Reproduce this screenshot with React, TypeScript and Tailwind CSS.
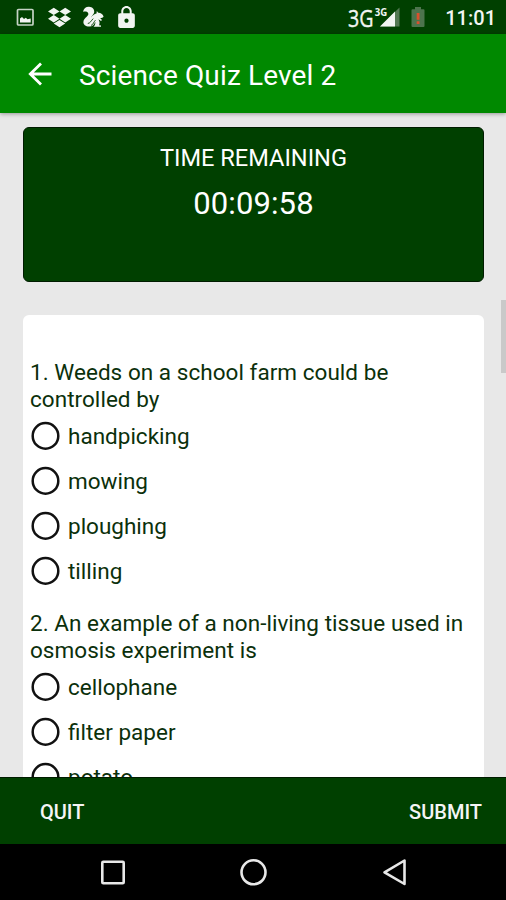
import { FaDropbox } from "react-icons/fa";
import { MdLock } from "react-icons/md";

const questions = [
  {
    text: "1. Weeds on a school farm could be controlled by",
    options: ["handpicking", "mowing", "ploughing", "tilling"],
  },
  {
    text: "2. An example of a non-living tissue used in osmosis experiment is",
    options: ["cellophane", "filter paper", "potato"],
  },
];

function StatusBar() {
  return (
    <div className="flex h-[34px] shrink-0 items-center bg-[#004000] text-[#f2f5f2]">
      <svg className="ml-4 h-[19px] w-[19px]" viewBox="0 0 19 19">
        <rect x="1.5" y="1.5" width="15.5" height="15.5" rx="1" fill="none" stroke="#c5d3c5" strokeWidth="1.7" />
        <path d="M4 14.500v-4l2-1.500 2 2 1.800-1.200 1.700 1.500 3.200-.8v4z" fill="#f2f5f2" />
      </svg>
      <FaDropbox className="ml-[13px] size-[23px]" />
      <svg className="ml-[11px] h-[22px] w-[22px]" viewBox="0 0 22 22" fill="currentColor">
        <path d="M1 5.8C1.600 2.500 4 .6 7 .7c3.500.1 5.600 2.500 5.200 5.500-.3 2.200-2.600 3.300-3.200 5.200 1.500-2.200 3.300-3.300 5.500-4l.3-2.300 1.500 1.600c2.300-.1 4.200 1.200 5.300 3.700-.6 1.200-1.900 1.500-3.500 1.500l1.900 2.200-1 .8-2.600-1.700c1.400 2.400 1.500 4.500.6 6.100l2 .1v1.300h-7.500c1.500-1.300 2.100-3 1.700-5-.9 2.800-2.700 4.800-5.700 4.900C3.600 20.700 1.300 18.600 1.400 16c.1-2.500 1.800-3.700 3.300-5.200 1.300-1.200 2.100-2.300 1.400-3.700C5.200 5.400 3.100 5.300 1 5.800z" />
        <path d="M5.800 17.500c2.300-.2 3.400-2.800 5.400-4.900M9 19.500c2.500-1.200 2.700-3.500 4.400-5.300" fill="none" stroke="#004000" strokeWidth=".9" />
      </svg>
      <MdLock className="ml-[10px] size-[25px]" />
      <svg className="ml-auto h-[34px] w-[52px]" viewBox="0 0 52 34">
        <text x="0" y="26.700" fill="#f2f5f2" stroke="#f2f5f2" strokeWidth=".4" fontFamily="Open Sans" fontSize="24.500" textLength="25.500" lengthAdjust="spacingAndGlyphs">3G</text>
        <path d="M51.500 7.500V26.500H32z" fill="#527852" />
        <path d="M47 11.500v15H32z" fill="#f2f5f2" />
        <text x="26.800" y="16" fill="#f2f5f2" stroke="#004000" strokeWidth=".5" paintOrder="stroke" fontFamily="Open Sans" fontWeight="700" fontSize="11" textLength="12.500" lengthAdjust="spacingAndGlyphs">3G</text>
      </svg>
      <svg className="ml-[11px] h-[20px] w-[14px]" viewBox="0 0 14 20">
        <path d="M4 0h6v2.200h2.500q1 0 1 1V19q0 1-1 1h-11q-1 0-1-1V3.200q0-1 1-1H4z" fill="#4d744d" />
        <path d="M5.700 6h2.800v6.800H5.700zm0 8.300h2.800V17H5.700z" fill="#d9502c" />
      </svg>
      <span className="mr-[10px] ml-[20px] pt-[2px] text-[20px] leading-6 font-medium">11:01</span>
    </div>
  );
}

function Option({ label }: { label: string }) {
  return (
    <label className="flex h-[45px] items-center">
      <svg className="ml-px h-[30px] w-[30px] shrink-0" viewBox="0 0 30 30">
        <circle cx="14.500" cy="14.900" r="12.800" fill="none" stroke="#111" strokeWidth="2.500" />
      </svg>
      <span className="ml-[7px] pt-[2px] text-[22.500px] leading-[27px]">{label}</span>
    </label>
  );
}

export default function App() {
  return (
    <div className="flex h-[900px] w-[506px] flex-col overflow-hidden bg-[#e8e8e8] font-[Roboto,sans-serif]">
      <StatusBar />
      <header className="z-10 flex h-[79px] shrink-0 items-center bg-[#008900] text-white shadow-[0_1px_4px_rgba(0,0,0,0.35)]">
        <svg className="ml-[28px] h-6 w-6" viewBox="0 0 24 24" fill="none" stroke="currentColor" strokeWidth="2.800">
          <path d="M23.500 12H2.500M13 1.500L2.300 12 13 22.500" />
        </svg>
        <h1 className="ml-[27px] pt-[4px] text-[28px] leading-8 tracking-[0.14px]">Science Quiz Level 2</h1>
      </header>

      <main className="relative flex min-h-0 flex-1 flex-col overflow-hidden pt-[14px] pr-[22px] pl-[23px]">
        <section className="h-[155px] shrink-0 rounded-md border border-[#001c00] bg-[#004000] pt-[15px] text-center text-white">
          <p className="text-[23.600px] leading-[30px]">TIME REMAINING</p>
          <p className="mt-[13px] text-[31px] leading-[36px] tracking-[0.1px]">00:09:58</p>
        </section>
        <section className="mt-[33px] shrink-0 rounded-t-md bg-white px-[7px] pt-[44px] text-[#0b300b]">
          {questions.map((q) => (
            <div key={q.text} className="mb-[17px]">
              <p className="text-[22.500px] leading-[27px] tracking-[0.04px]">{q.text}</p>
              {q.options.map((option) => (
                <Option key={option} label={option} />
              ))}
            </div>
          ))}
        </section>
        <div className="absolute top-[187px] right-0 h-[73px] w-[5px] bg-[#c9c9c9]" />
      </main>

      <footer className="flex h-[67px] shrink-0 items-center justify-between border-t border-[#001c00] bg-[#004000] pt-[2px] pr-[24px] pl-[40px] text-[20px] font-medium text-[#f5f5f5]">
        <button>QUIT</button>
        <button>SUBMIT</button>
      </footer>
      <nav className="flex h-[56px] shrink-0 items-center bg-black text-[#e8e8e8]">
        <svg className="h-[56px] w-[506px]" viewBox="0 0 506 56" fill="none" stroke="currentColor" strokeWidth="2.600" strokeLinejoin="round">
          <rect x="102.300" y="17.800" width="21.400" height="21.400" rx="1" />
          <circle cx="253.500" cy="28.300" r="12" />
          <path d="M404.500 16.500v23.500L384.500 28.300z" />
        </svg>
      </nav>
    </div>
  );
}
